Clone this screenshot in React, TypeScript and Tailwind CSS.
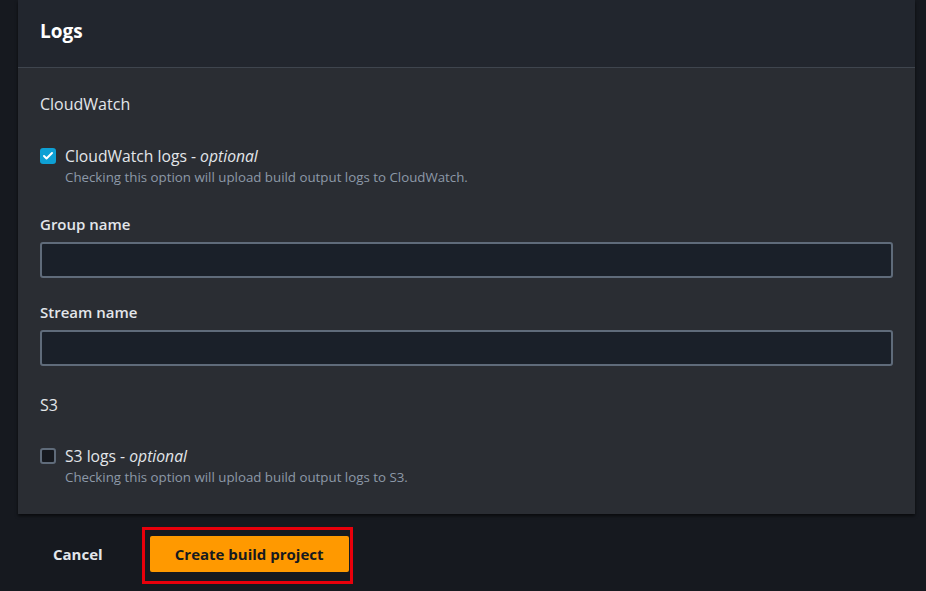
import { Check } from "lucide-react";

function Checkbox({ checked }: { checked: boolean }) {
    return checked ? (
        <div className="w-4 h-4 rounded-[3px] bg-[#0ea0d4] flex items-center justify-center flex-shrink-0">
            <Check className="w-3 h-3 text-white" strokeWidth={4} />
        </div>
    ) : (
        <div className="w-4 h-4 rounded-[3px] border-2 border-[#5f6b7a] bg-[#16191f] flex-shrink-0" />
    );
}

function Option({ checked, title, desc }: { checked: boolean; title: string; desc: string }) {
    return (
        <div className="flex gap-[9px]">
            <div className="pt-[2px]">
                <Checkbox checked={checked} />
            </div>
            <div>
                <p className="text-[15.7px] leading-[20px] text-[#e3e6ea]">
                    {title} - <i>optional</i>
                </p>
                <p className="text-[13.3px] leading-[22px] text-[#8d99a8]">{desc}</p>
            </div>
        </div>
    );
}

function Field({ label }: { label: string }) {
    return (
        <div>
            <label className="block text-[15px] leading-[20px] font-semibold text-[#e3e6ea] mb-[8px]">{label}</label>
            <input className="w-full h-[36px] bg-[#1a2029] border-2 border-[#5f6b7a] rounded-[3px] outline-none" />
        </div>
    );
}

export default function App() {
    return (
        <div className="w-[926px] h-[591px] bg-[#16191f] overflow-hidden" style={{ fontFamily: "'Open Sans', 'Noto Sans', sans-serif" }}>
            <div className="ml-[18px] w-[897px] bg-[#2a2d33] shadow-[0_2px_3px_rgba(0,0,0,0.6)]">
                {/* header */}
                <div className="h-[68px] bg-[#22262e] border-b border-[#3f454e] px-[22px] pt-[18px]">
                    <h2 className="text-[19px] leading-[26px] font-bold text-white">Logs</h2>
                </div>

                {/* body */}
                <div className="px-[22px] pt-[25px] pb-[26px]">
                    <h3 className="text-[16px] leading-[22px] text-[#e3e6ea]">CloudWatch</h3>

                    <div className="mt-[31px]">
                        <Option
                            checked
                            title="CloudWatch logs"
                            desc="Checking this option will upload build output logs to CloudWatch."
                        />
                    </div>

                    <div className="mt-[26px] w-[853px] space-y-[24px]">
                        <Field label="Group name" />
                        <Field label="Stream name" />
                    </div>

                    <h3 className="mt-[28px] text-[16px] leading-[22px] text-[#e3e6ea]">S3</h3>

                    <div className="mt-[30px]">
                        <Option
                            checked={false}
                            title="S3 logs"
                            desc="Checking this option will upload build output logs to S3."
                        />
                    </div>
                </div>
            </div>

            {/* footer */}
            <div className="flex items-center mt-[13px] pl-[53px]">
                <button className="text-[15px] font-bold text-[#e3e6ea] -mt-[2px]">Cancel</button>
                <div className="ml-[39px] border-[3px] border-[#e8000b] pl-[5px] pr-[1px] pt-[6px] pb-[9px]">
                    <button className="w-[199px] h-[36px] bg-[#ff9900] rounded-[2px] text-[15px] font-bold text-[#16191f]">
                        Create build project
                    </button>
                </div>
            </div>
        </div>
    );
}
